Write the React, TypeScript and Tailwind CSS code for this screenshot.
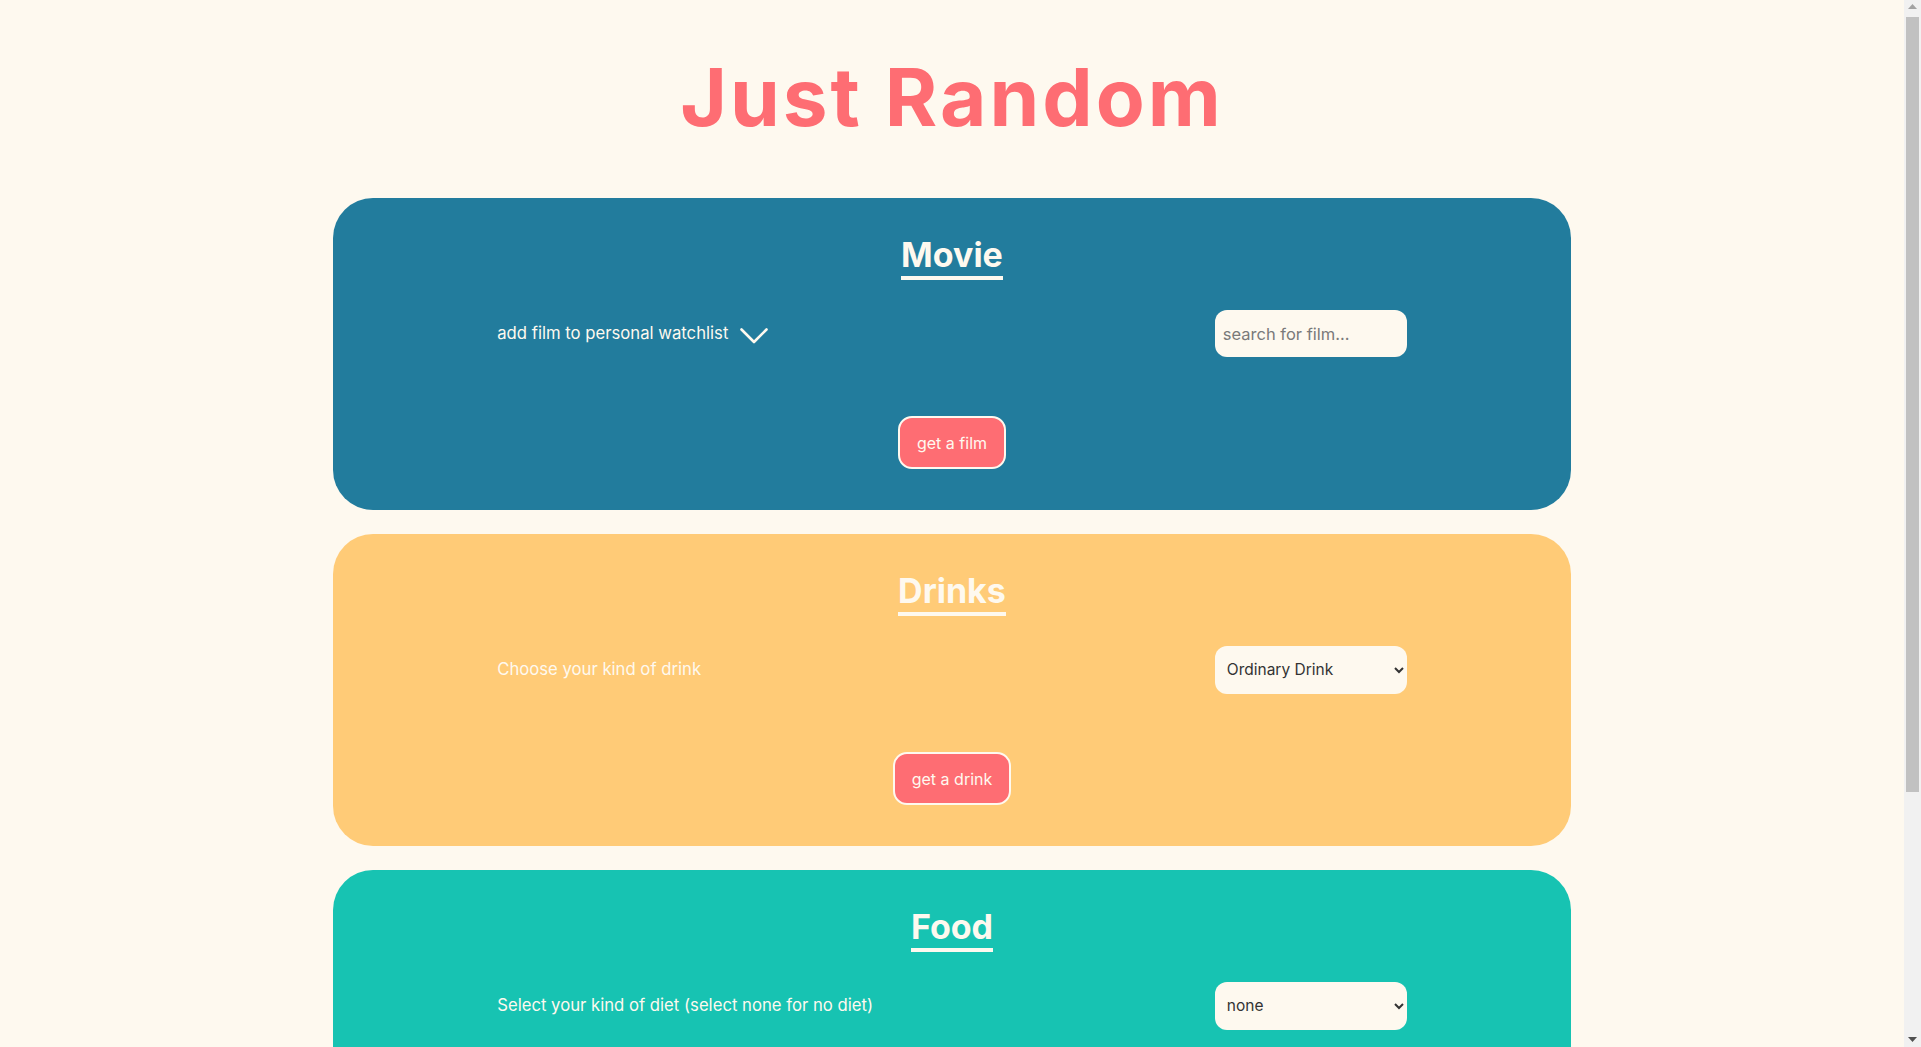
import React from 'react';

function Chevron() {
  return (
    <svg width="28" height="16" viewBox="0 0 28 16" className="shrink-0 mt-[6px]" fill="none">
      <path d="M1.5 1.5 L14 14 L26.5 1.5" stroke="#fef9ef" strokeWidth="2.6" strokeLinecap="round" strokeLinejoin="round" />
    </svg>
  );
}

function Card({
  title,
  bg,
  left,
  right,
  button,
}: {
  title: string;
  bg: string;
  left: React.ReactNode;
  right: React.ReactNode;
  button: string;
}) {
  return (
    <section className={`w-[65%] mx-auto rounded-[40px] flex flex-col items-center pt-[37px] pb-[41px] ${bg}`}>
      <h2 className="inline-block text-[34px] leading-[40px] font-bold text-[#fef9ef] pb-px border-b-4 border-[#fef9ef]">
        {title}
      </h2>
      <div className="w-full mt-[30px] px-[164px] flex justify-between items-center h-[47px]">
        {left}
        {right}
      </div>
      <button className="mt-[59px] h-[53px] px-[17px] rounded-[14px] border-2 border-[#fef9ef] bg-[#fe6d73] text-[#fef9ef] text-[16px]">
        {button}
      </button>
    </section>
  );
}

// page scrollbar as it shows in the screenshot
function ScrollTrack() {
  return (
    <aside className="w-[17px] h-screen sticky top-0 shrink-0 bg-[#f1f1f1] flex flex-col items-center">
      <svg width="9" height="5" viewBox="0 0 9 5" className="mt-[4px]">
        <path d="M0 5 L4.5 0 L9 5 Z" fill="#a3a3a3" />
      </svg>
      <div className="mt-[8px] w-[13px] h-[775px] bg-[#c1c1c1]" />
      <svg width="9" height="5" viewBox="0 0 9 5" className="mt-auto mb-[5px]">
        <path d="M0 0 L4.5 5 L9 0 Z" fill="#505050" />
      </svg>
    </aside>
  );
}

export default function App() {
  return (
    <div className="flex bg-[#fef9ef] font-['Inter',sans-serif]">
      <main className="flex-1 min-h-[1368px] pb-[186px]">
        <h1 className="pt-[57px] text-center text-[80px] leading-[80px] font-bold text-[#fe6d73] tracking-[3px]">
          Just Random
        </h1>

        <div className="mt-[61px] flex flex-col gap-6">
          <Card
            title="Movie"
            bg="bg-[#227c9d]"
            button="get a film"
            left={
              <div className="flex items-center gap-3 text-[#fef9ef] text-[16.7px]">
                <span>add film to personal watchlist</span>
                <Chevron />
              </div>
            }
            right={
              <input
                type="text"
                placeholder="search for film..."
                className="w-[192px] h-[47px] rounded-[12px] bg-[#fef9ef] px-2 text-[16.5px] text-[#333] placeholder:text-[#7a7a7a] outline-none"
              />
            }
          />

          <Card
            title="Drinks"
            bg="bg-[#ffcb77]"
            button="get a drink"
            left={<span className="text-[#fef9ef] text-[16.7px]">Choose your kind of drink</span>}
            right={
              <select
                defaultValue="Ordinary Drink"
                className="w-[192px] h-[48px] rounded-[12px] bg-[#fef9ef] pl-2 pr-1 text-[15.5px] text-[#333] outline-none"
              >
                <option>Ordinary Drink</option>
                <option>Cocktail</option>
                <option>Shot</option>
              </select>
            }
          />

          <Card
            title="Food"
            bg="bg-[#17c3b2]"
            button="get a meal"
            left={<span className="text-[#fef9ef] text-[16.7px]">Select your kind of diet (select none for no diet)</span>}
            right={
              <select
                defaultValue="none"
                className="w-[192px] h-[48px] rounded-[12px] bg-[#fef9ef] pl-2 pr-1 text-[15.5px] text-[#333] outline-none"
              >
                <option>none</option>
                <option>vegetarian</option>
                <option>vegan</option>
              </select>
            }
          />
        </div>
      </main>
      <ScrollTrack />
    </div>
  );
}
